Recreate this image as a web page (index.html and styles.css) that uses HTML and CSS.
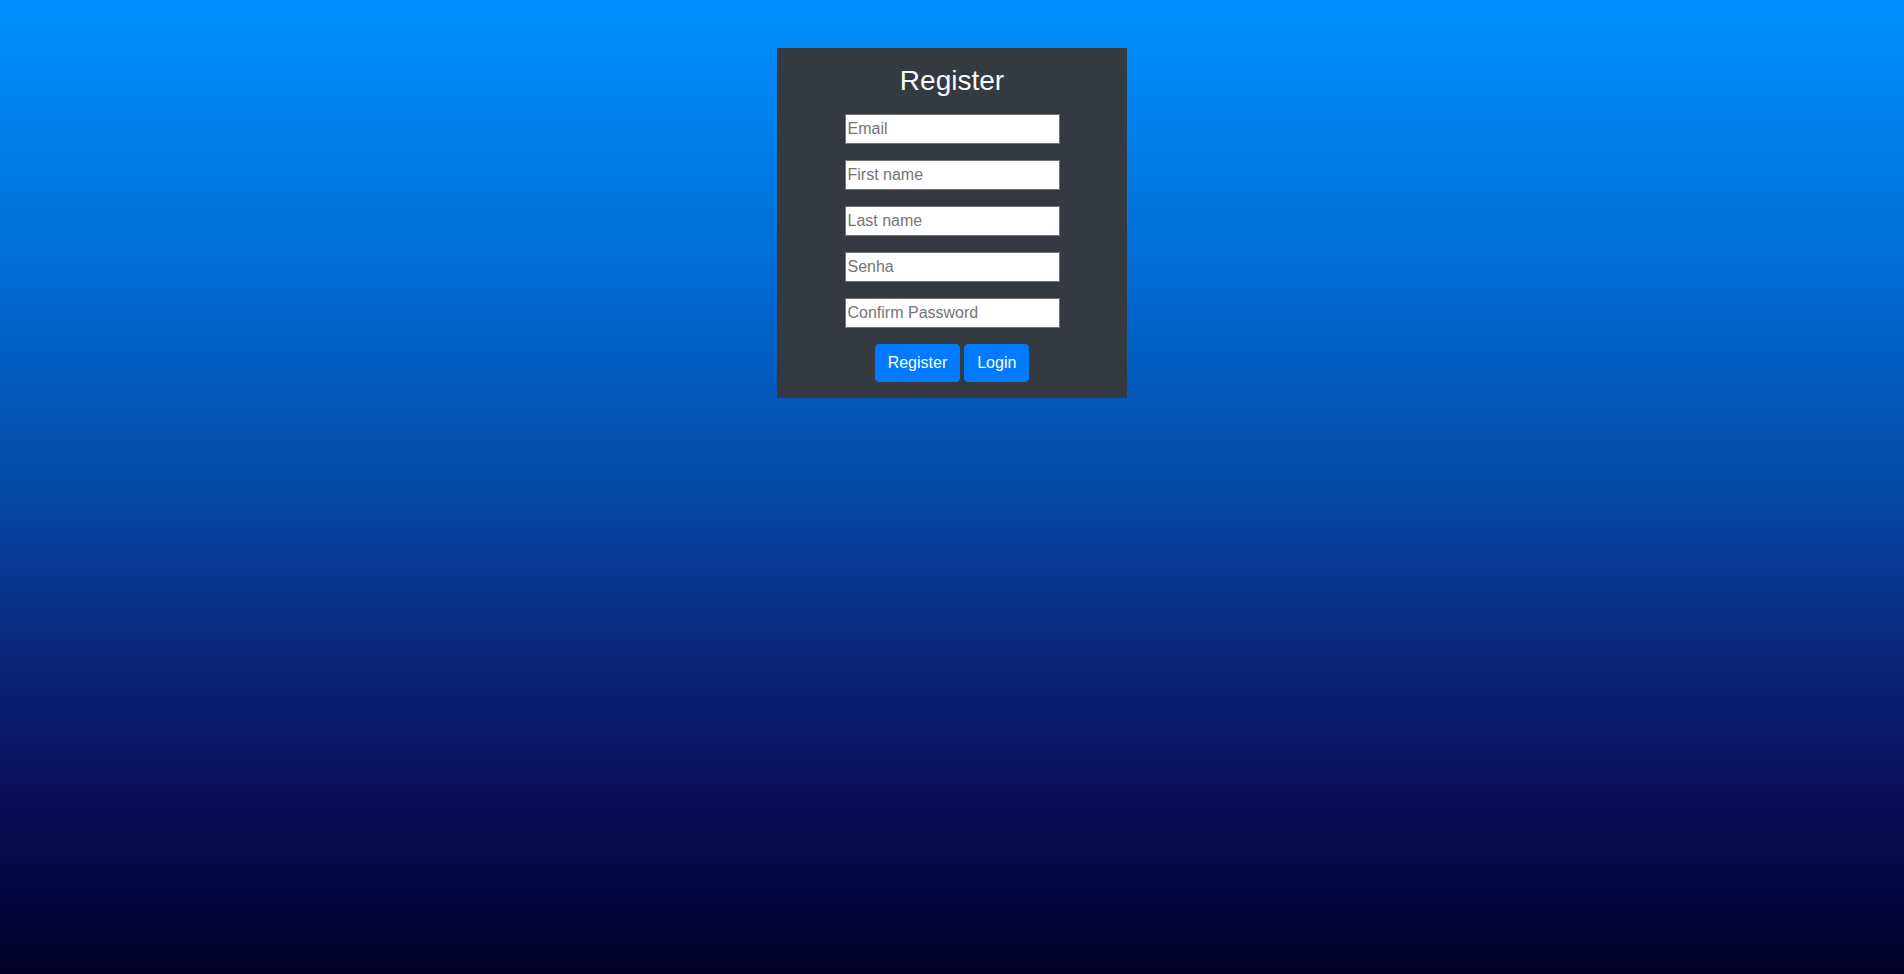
FILE: index.html
```html
<!DOCTYPE html>
<html lang="en">
<head>
<meta charset="utf-8">
<title>Register</title>
<link rel="stylesheet" href="styles.css">
</head>
<body>
<main class="page">
  <form class="card">
    <h3 class="title">Register</h3>
    <input class="field" type="email" placeholder="Email">
    <input class="field" type="text" placeholder="First name">
    <input class="field" type="text" placeholder="Last name">
    <input class="field" type="password" placeholder="Senha">
    <input class="field" type="password" placeholder="Confirm Password">
    <div class="actions">
      <button class="btn" type="button">Register</button>
      <button class="btn" type="button">Login</button>
    </div>
  </form>
</main>
</body>
</html>
```
FILE: styles.css
```css
html, body {
  margin: 0;
  padding: 0;
  height: 100%;
}
body {
  font-family: "Liberation Sans", Arial, sans-serif;
  background: linear-gradient(to bottom, #0091ff 0%, #0070d8 25%, #054aa8 50%, #0a2478 68%, #0b0b55 84%, #000028 100%);
  min-height: 100vh;
}
.page {
  display: flex;
  justify-content: center;
  padding-top: 48px;
}
.card {
  width: 350px;
  box-sizing: border-box;
  padding: 16px 0;
  background: #343a40;
  display: flex;
  flex-direction: column;
  align-items: center;
}
.title {
  margin: 0 0 16px;
  font-size: 28px;
  font-weight: 400;
  line-height: 1.2;
  color: #f8f9fa;
  height: 34px;
}
.field {
  box-sizing: border-box;
  width: 215px;
  height: 30px;
  margin: 0 0 16px;
  padding: 0 2px;
  border: 1px solid #767676;
  background: #fff;
  font-family: "Liberation Sans", Arial, sans-serif;
  font-size: 16px;
  color: #212529;
}
.field::placeholder {
  color: #757575;
  opacity: 1;
}
.actions {
  display: flex;
  gap: 4px;
}
.btn {
  height: 38px;
  padding: 0 12px;
  border: 1px solid #007bff;
  border-radius: 4px;
  background: #007bff;
  color: #fff;
  font-family: "Liberation Sans", Arial, sans-serif;
  font-size: 16px;
  line-height: 24px;
  cursor: pointer;
}
```
